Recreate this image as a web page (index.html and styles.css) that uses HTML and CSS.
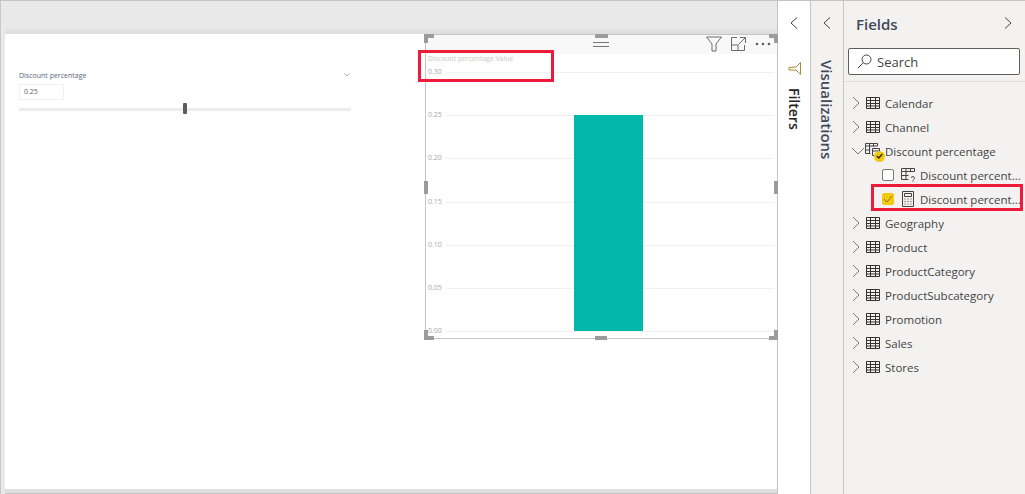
FILE: index.html
```html
<!DOCTYPE html>
<html lang="en">
<head>
<meta charset="utf-8">
<title>Fields</title>
<link rel="stylesheet" href="styles.css">
</head>
<body>
<div class="app">
  <main class="canvas">
    <div class="top-strip"></div>
    <div class="page">
      <section class="slicer">
        <div class="slicer-head"><span>Discount percentage</span>
          <svg class="slicer-chev" width="6" height="4" viewBox="0 0 6 4"><path d="M.5.5 3 3 5.500.5" fill="none" stroke="#9a9a9a" stroke-width=".8"/></svg>
        </div>
        <div class="slicer-input">0.25</div>
        <div class="slider"><span class="thumb"></span></div>
      </section>

      <section class="visual">
        <div class="visual-head">
          <span class="grip"></span>
          <div class="visual-tools">
            <svg width="16" height="16" viewBox="0 0 16 16"><path d="M.5 1h15L10 8v7H6V8z" fill="none" stroke="#6f6a78" stroke-width="1"/></svg>
            <svg width="15" height="14" viewBox="0 0 15 14"><path d="M6 .5H.5v13h13V8M.5 8H7v5.500M9 .5h5.500V6M14.500.5 7.500 7.500" fill="none" stroke="#6f6a78" stroke-width="1"/></svg>
            <svg width="16" height="4" viewBox="0 0 16 4"><circle cx="2" cy="2" r="1.300" fill="#5f5f5f"/><circle cx="8" cy="2" r="1.300" fill="#5f5f5f"/><circle cx="14" cy="2" r="1.300" fill="#5f5f5f"/></svg>
          </div>
        </div>
        <div class="chart-title">Discount percentage Value</div>
        <div class="axis">
          <div class="tick"><span>0.30</span><i></i></div>
          <div class="tick"><span>0.25</span><i></i></div>
          <div class="tick"><span>0.20</span><i></i></div>
          <div class="tick"><span>0.15</span><i></i></div>
          <div class="tick"><span>0.10</span><i></i></div>
          <div class="tick"><span>0.05</span><i></i></div>
          <div class="tick"><span>0.00</span><i></i></div>
        </div>
        <div class="bar"></div>
        <span class="h h-tl-a"></span><span class="h h-tl-b"></span>
        <span class="h h-tr-a"></span><span class="h h-tr-b"></span>
        <span class="h h-bl-a"></span><span class="h h-bl-b"></span>
        <span class="h h-br-a"></span><span class="h h-br-b"></span>
        <span class="h h-top"></span><span class="h h-bottom"></span>
        <span class="h h-left"></span><span class="h h-right"></span>
      </section>
      <div class="callout callout-title"></div>
    </div>
    <div class="bottom-strip"></div>
  </main>

  <aside class="rail rail-filters">
    <svg class="chev" width="8" height="12" viewBox="0 0 8 12"><path d="M7 .5 1 6l6 5.500" fill="none" stroke="#444" stroke-width="1"/></svg>
    <svg class="filter-ico" width="13" height="13" viewBox="0 0 13 13"><path d="M12.500 .5v12L8 8H1V5.500L8 5z" fill="none" stroke="#a88a3a" stroke-width="1"/></svg>
    <div class="rail-label">Filters</div>
  </aside>

  <aside class="rail rail-viz">
    <svg class="chev" width="8" height="12" viewBox="0 0 8 12"><path d="M7 .5 1 6l6 5.500" fill="none" stroke="#444" stroke-width="1"/></svg>
    <div class="rail-label viz-label">Visualizations</div>
  </aside>

  <aside class="fields">
    <header class="fields-head">
      <h1>Fields</h1>
      <svg width="8" height="12" viewBox="0 0 8 12"><path d="M1 .5 7 6l-6 5.500" fill="none" stroke="#444" stroke-width="1"/></svg>
    </header>
    <div class="search">
      <svg width="15" height="15" viewBox="0 0 15 15"><circle cx="9.500" cy="5.500" r="4.500" fill="none" stroke="#444" stroke-width="1"/><path d="M6.300 8.700 1 14" stroke="#444" stroke-width="1"/></svg>
      <span>Search</span>
    </div>
    <ul class="tree">
      <li class="row">
        <svg class="exp" width="8" height="14" viewBox="0 0 8 14"><path d="M1 1l6 6-6 6" fill="none" stroke="#7a7a7a"/></svg>
        <svg class="tbl" width="14" height="12" viewBox="0 0 14 12"><path d="M.5.5h13v11H.5zM.5 3.500h13M.5 6.500h13M.5 9h13M4.500 .5v11M9.500 .5v11" fill="none" stroke="#333"/></svg>
        <span>Calendar</span>
      </li>
      <li class="row">
        <svg class="exp" width="8" height="14" viewBox="0 0 8 14"><path d="M1 1l6 6-6 6" fill="none" stroke="#7a7a7a"/></svg>
        <svg class="tbl" width="14" height="12" viewBox="0 0 14 12"><path d="M.5.5h13v11H.5zM.5 3.500h13M.5 6.500h13M.5 9h13M4.500 .5v11M9.500 .5v11" fill="none" stroke="#333"/></svg>
        <span>Channel</span>
      </li>
      <li class="row row-open">
        <svg class="exp-open" width="14" height="8" viewBox="0 0 14 8"><path d="M1 1l6 6 6-6" fill="none" stroke="#7a7a7a"/></svg>
        <span class="tbl-wrap">
          <svg class="tbl" width="16" height="14" viewBox="0 0 16 14"><path d="M.5.500h12v2.500H.5zM.5 3v7.500h5M4.500 .5v10M8.500 .5v3M.5 7h5M7.500 5.500h7v7h-7zM7.500 8h7" fill="none" stroke="#444"/></svg>
          <span class="badge"><svg width="7" height="6" viewBox="0 0 7 6"><path d="M.8 3 2.800 5 6.300 1" fill="none" stroke="#222" stroke-width="1.300"/></svg></span>
        </span>
        <span>Discount percentage</span>
      </li>
      <li class="row row-child">
        <span class="check"></span>
        <svg class="tbl" width="16" height="14" viewBox="0 0 16 14"><path d="M.5.500h13v3H.5zM.5 3.500v8h7M5 .5v11M9.500 .5v3M.5 7.500h7" fill="none" stroke="#444"/><path d="M10 9.500c1-1.500 3.500-1 3.500.5 0 1.200-1.500 1.300-1.500 2.500M12 13.200v.8" fill="none" stroke="#444"/></svg>
        <span class="ell">Discount percent...</span>
      </li>
      <li class="row row-child">
        <span class="check checked"><svg width="10" height="8" viewBox="0 0 10 8"><path d="M1 4l3 3 5-6" fill="none" stroke="#8a7410" stroke-width="1"/></svg></span>
        <svg class="tbl calc" width="12" height="16" viewBox="0 0 12 16"><path d="M.5.500h11v15H.5zM2.500 2.500h7v3h-7z" fill="none" stroke="#444"/><path d="M2.500 8h1M5.500 8h1M8.500 8h1M2.500 10.500h1M5.500 10.500h1M8.500 10.500h1M2.500 13h1M5.500 13h1M8.500 13h1" stroke="#444"/></svg>
        <span class="ell">Discount percent...</span>
      </li>
      <li class="row">
        <svg class="exp" width="8" height="14" viewBox="0 0 8 14"><path d="M1 1l6 6-6 6" fill="none" stroke="#7a7a7a"/></svg>
        <svg class="tbl" width="14" height="12" viewBox="0 0 14 12"><path d="M.5.5h13v11H.5zM.5 3.500h13M.5 6.500h13M.5 9h13M4.500 .5v11M9.500 .5v11" fill="none" stroke="#333"/></svg>
        <span>Geography</span>
      </li>
      <li class="row">
        <svg class="exp" width="8" height="14" viewBox="0 0 8 14"><path d="M1 1l6 6-6 6" fill="none" stroke="#7a7a7a"/></svg>
        <svg class="tbl" width="14" height="12" viewBox="0 0 14 12"><path d="M.5.5h13v11H.5zM.5 3.500h13M.5 6.500h13M.5 9h13M4.500 .5v11M9.500 .5v11" fill="none" stroke="#333"/></svg>
        <span>Product</span>
      </li>
      <li class="row">
        <svg class="exp" width="8" height="14" viewBox="0 0 8 14"><path d="M1 1l6 6-6 6" fill="none" stroke="#7a7a7a"/></svg>
        <svg class="tbl" width="14" height="12" viewBox="0 0 14 12"><path d="M.5.5h13v11H.5zM.5 3.500h13M.5 6.500h13M.5 9h13M4.500 .5v11M9.500 .5v11" fill="none" stroke="#333"/></svg>
        <span>ProductCategory</span>
      </li>
      <li class="row">
        <svg class="exp" width="8" height="14" viewBox="0 0 8 14"><path d="M1 1l6 6-6 6" fill="none" stroke="#7a7a7a"/></svg>
        <svg class="tbl" width="14" height="12" viewBox="0 0 14 12"><path d="M.5.5h13v11H.5zM.5 3.500h13M.5 6.500h13M.5 9h13M4.500 .5v11M9.500 .5v11" fill="none" stroke="#333"/></svg>
        <span>ProductSubcategory</span>
      </li>
      <li class="row">
        <svg class="exp" width="8" height="14" viewBox="0 0 8 14"><path d="M1 1l6 6-6 6" fill="none" stroke="#7a7a7a"/></svg>
        <svg class="tbl" width="14" height="12" viewBox="0 0 14 12"><path d="M.5.5h13v11H.5zM.5 3.500h13M.5 6.500h13M.5 9h13M4.500 .5v11M9.500 .5v11" fill="none" stroke="#333"/></svg>
        <span>Promotion</span>
      </li>
      <li class="row">
        <svg class="exp" width="8" height="14" viewBox="0 0 8 14"><path d="M1 1l6 6-6 6" fill="none" stroke="#7a7a7a"/></svg>
        <svg class="tbl" width="14" height="12" viewBox="0 0 14 12"><path d="M.5.5h13v11H.5zM.5 3.500h13M.5 6.500h13M.5 9h13M4.500 .5v11M9.500 .5v11" fill="none" stroke="#333"/></svg>
        <span>Sales</span>
      </li>
      <li class="row">
        <svg class="exp" width="8" height="14" viewBox="0 0 8 14"><path d="M1 1l6 6-6 6" fill="none" stroke="#7a7a7a"/></svg>
        <svg class="tbl" width="14" height="12" viewBox="0 0 14 12"><path d="M.5.5h13v11H.5zM.5 3.500h13M.5 6.500h13M.5 9h13M4.500 .5v11M9.500 .5v11" fill="none" stroke="#333"/></svg>
        <span>Stores</span>
      </li>
    </ul>
    <div class="callout callout-field"></div>
  </aside>
</div>
</body>
</html>
```

FILE: styles.css
```css
* { box-sizing: border-box; }
html, body { margin: 0; padding: 0; }
body { font-family: "Open Sans", "Noto Sans", sans-serif; color: #333; overflow: hidden; }
ul { list-style: none; margin: 0; padding: 0; }
h1 { margin: 0; font: inherit; }

.app { width: 1025px; height: 494px; display: flex; background: #fff; border-top: 1px solid #c4c4c4; }

.canvas { width: 778px; display: flex; flex-direction: column; background: #e9e9e9; border-left: 1px solid #c8c8c8; border-right: 1px solid #c4c4c4; }
.top-strip { height: 33px; margin-left: 4px; background: linear-gradient(#e9e9e9 26px, #dcdcdc); }
.page { position: relative; flex: 1; margin-left: 4px; background: #fff; }
.bottom-strip { height: 5px; margin-left: 4px; background: #dfdfdf; border-bottom: 1px solid #c4c4c4; }

.slicer { position: absolute; left: 14px; top: 35px; width: 332px; }
.slicer-head { height: 12px; display: flex; justify-content: space-between; align-items: center; font-size: 7px; color: #5a6a78; }
.slicer-chev { margin-right: 1px; }
.slicer-input { width: 45px; height: 16px; margin-top: 3px; padding-left: 4px; border: 1px solid #f0f0f0; font-size: 7px; line-height: 14px; color: #666; }
.slider { position: relative; height: 3px; margin-top: 8px; background: #ececec; }
.thumb { position: absolute; left: 164px; top: -5px; width: 4px; height: 11px; background: #5c5c5c; border-radius: 1px; }

.visual { position: absolute; left: 420px; top: 0; width: 352px; height: 305px; border: 1px solid #c4c4c4; border-right: 0; background: #fff; }
.h { position: absolute; background: #9b9b9b; }
.h-tl-a { left: -2px; top: -1px; width: 10px; height: 4px; }
.h-tl-b { left: -2px; top: -1px; width: 4px; height: 9px; }
.h-tr-a { right: -1px; top: -1px; width: 9px; height: 4px; }
.h-tr-b { right: -1px; top: -1px; width: 4px; height: 9px; }
.h-bl-a { left: -2px; bottom: -2px; width: 10px; height: 4px; }
.h-bl-b { left: -2px; bottom: -2px; width: 4px; height: 10px; }
.h-br-a { right: -1px; bottom: -2px; width: 9px; height: 4px; }
.h-br-b { right: -1px; bottom: -2px; width: 4px; height: 10px; }
.h-top { left: 169px; top: -1px; width: 13px; height: 4px; }
.h-bottom { left: 169px; bottom: -2px; width: 12px; height: 4px; }
.h-left { left: -2px; top: 146px; width: 4px; height: 13px; }
.h-right { right: -1px; top: 146px; width: 4px; height: 13px; }

.visual-head { position: relative; height: 19px; background: #f8f8f8; display: flex; align-items: center; justify-content: flex-end; padding-right: 6px; }
.grip { position: absolute; left: 167px; top: 7px; width: 16px; height: 5px; border-top: 1px solid #777; border-bottom: 1px solid #777; }
.visual-tools { display: flex; align-items: center; gap: 9px; margin-top: -2px; }
.chart-title { height: 12px; margin: 0 0 0 2px; font-size: 6.600px; line-height: 10px; font-weight: 600; color: #d6d2ce; }
.axis { margin-top: 2px; }
.tick { height: 43.200px; display: flex; align-items: flex-start; padding-left: 2px; margin-right: 3px; }
.tick span { width: 18px; font-size: 7px; line-height: 10px; color: #a8a8a8; margin-top: -1px; }
.tick i { flex: 1; height: 1px; margin-top: 4px; background: #f1f1f1; }
.bar { position: absolute; left: 148px; top: 80px; width: 69px; height: 216px; background: #01b8aa; }

.callout { position: absolute; border: 3px solid #ee1a3a; pointer-events: none; }
.callout-title { left: 413px; top: 16px; width: 136px; height: 32px; }
.callout-field { left: 27px; top: 183px; width: 152px; height: 27px; }

.rail { width: 33px; position: relative; display: flex; flex-direction: column; align-items: center; border-right: 1px solid #c8c8c8; background: #fff; }
.rail .chev { margin-top: 16px; margin-left: -1px; }
.filter-ico { margin-top: 33px; }
.rail-label { writing-mode: vertical-rl; font-size: 14px; font-weight: 600; line-height: 18px; color: #252423; margin-top: 13px; }
.rail-viz { background: #f3f2f1; }
.rail-label.viz-label { margin-top: 31px; font-size: 15px; color: #3f4b5a; }

.fields { position: relative; width: 181px; flex: none; background: #f3f2f1; }
.fields-head { height: 46px; display: flex; justify-content: space-between; align-items: center; padding: 0 13px 0 12px; color: #3f4b5a; }
.fields-head h1 { font-size: 15px; font-weight: 600; }
.fields-head svg { margin-top: -3px; }
.search { height: 27px; margin: 1px 5px 6px 4px; padding-left: 8px; display: flex; align-items: center; gap: 5px; background: #fff; border: 1px solid #605e5c; border-radius: 2px; font-size: 13px; line-height: 18px; color: #444; }
.tree { border-top: 1px solid #e1dfdd; padding-top: 9px; }
.row { height: 24px; display: flex; align-items: center; padding-left: 8px; font-size: 11.500px; color: #444; white-space: nowrap; }
.row .exp { margin-right: 6px; }
.row .tbl { margin-right: 5px; }
.row-open { padding-left: 7px; }
.tbl-wrap { position: relative; display: flex; width: 20px; }
.tbl-wrap .tbl { margin: -3px 0 0 0; }
.badge { position: absolute; left: 9px; top: 5px; width: 11px; height: 11px; border-radius: 50%; background: #f2c811; display: flex; align-items: center; justify-content: center; }
.row-child { padding-left: 38px; }
.check { width: 12px; height: 12px; border: 1px solid #7a7a7a; border-radius: 2px; background: #fff; margin-right: 7px; display: flex; align-items: center; justify-content: center; flex: none; }
.checked { background: #f2c811; border-color: #f2c811; }
.row-child .tbl { margin-right: 3px; }
.row-child .calc { margin: 0 6px 0 1px; }
.ell { color: #444; }
```
